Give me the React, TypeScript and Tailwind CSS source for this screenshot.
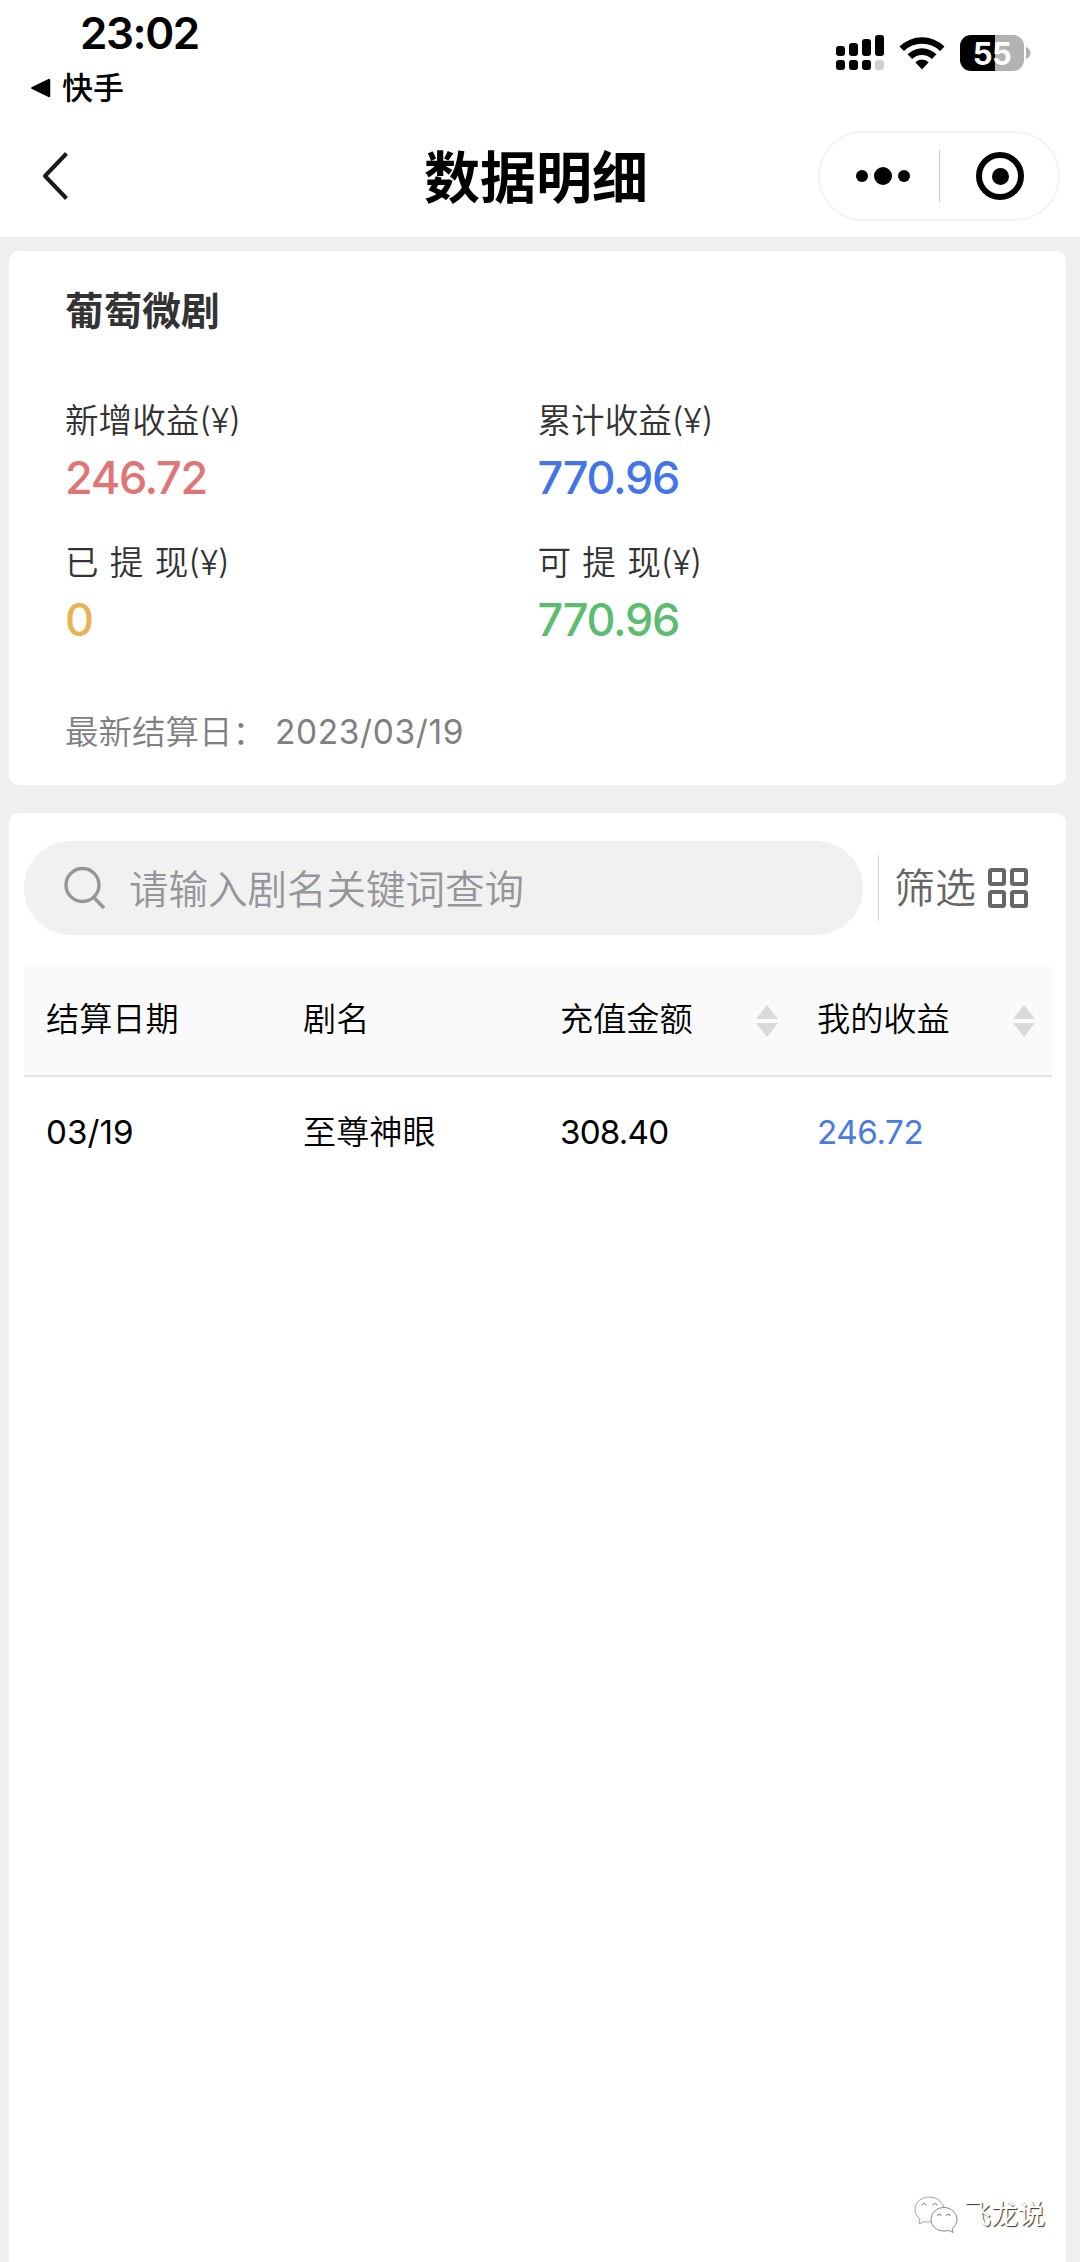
import React from 'react';

const stats = [
  { label: '新增收益(¥)', value: '246.72', color: 'text-[#e07575]' },
  { label: '累计收益(¥)', value: '770.96', color: 'text-[#4475e8]' },
  { label: '已 提 现(¥)', value: '0', color: 'text-[#e8b255]' },
  { label: '可 提 现(¥)', value: '770.96', color: 'text-[#5bbd70]' },
];

const columns = [
  { title: '结算日期', sortable: false },
  { title: '剧名', sortable: false },
  { title: '充值金额', sortable: true },
  { title: '我的收益', sortable: true },
];

const rows = [
  { date: '03/19', name: '至尊神眼', amount: '308.40', income: '246.72' },
];

const SignalIcon = () => (
  <svg width="48" height="36" viewBox="0 0 48 36">
    <rect x="0" y="11" width="9" height="10" rx="3" />
    <rect x="13" y="8" width="9" height="13" rx="3" />
    <rect x="26" y="4" width="9" height="17" rx="3" />
    <rect x="39" y="0" width="9" height="21" rx="3" />
    <rect x="0" y="25" width="9" height="10" rx="3" />
    <rect x="13" y="25" width="9" height="10" rx="3" />
    <rect x="26" y="25" width="9" height="10" rx="3" />
    <rect x="39" y="25" width="9" height="10" rx="3" fill="#d0d0d0" />
  </svg>
);

const WifiIcon = () => (
  <svg width="46" height="34" viewBox="0 0 46 34">
    <path d="M0.5 10.5 A32 32 0 0 1 45.5 10.5 L41 15 A25.7 25.7 0 0 0 5 15 Z" />
    <path d="M8.5 18.3 A20.6 20.6 0 0 1 37.5 18.3 L32.8 23 A14 14 0 0 0 13.2 23 Z" />
    <path d="M16.3 26.3 A9.5 9.5 0 0 1 29.7 26.3 L23 33.5 Z" />
  </svg>
);

const Battery = () => (
  <div className="flex items-center gap-[2px]">
    <div className="flex h-9 w-16 items-center justify-center rounded-[11px] bg-linear-to-r from-black from-55% to-[#b2b2b2] to-55% text-[31px] font-bold leading-none tracking-[-0.5px] text-white">
      55
    </div>
    <svg width="5" height="12" viewBox="0 0 5 12">
      <path d="M0 0 C6 2 6 10 0 12 Z" fill="#b2b2b2" />
    </svg>
  </div>
);

const StatusBar = () => (
  <div className="flex h-[115px] justify-between pl-[31px] pr-[49px]">
    <div className="pt-[9px]">
      <div className="pl-[49px] text-[44px] font-semibold leading-[48px] tracking-[-1.4px]">23:02</div>
      <div className="mt-[10px] flex h-[42px] items-center gap-[11px] text-[31px] font-medium">
        <svg width="20" height="20" viewBox="0 0 20 20">
          <path d="M1.5 10 L18 2 V18 Z" stroke="#000" strokeWidth="2.5" strokeLinejoin="round" />
        </svg>
        快手
      </div>
    </div>
    <div className="flex h-9 items-center gap-[15px] mt-[35px]">
      <SignalIcon />
      <WifiIcon />
      <Battery />
    </div>
  </div>
);

const NavBar = () => (
  <div className="flex h-[122px] items-center justify-between pl-[41px] pr-5">
    <svg className="mr-[185px]" width="28" height="50" viewBox="0 0 28 50" fill="none" stroke="#1a1a1a" strokeWidth="4">
      <path d="M25.5 2.5 L4 25 L25.5 47.5" strokeLinejoin="round" />
    </svg>
    <h1 className="whitespace-nowrap pt-[3px] text-[56px] font-bold leading-none">数据明细</h1>
    <div className="flex h-[90px] w-[242px] items-center rounded-full border-2 border-[#f3f3f3]">
      <div className="flex w-[119px] items-center justify-center gap-[6px] pl-[6px]">
        <span className="size-3 rounded-full bg-black" />
        <span className="size-[18px] rounded-full bg-black" />
        <span className="size-3 rounded-full bg-black" />
      </div>
      <div className="h-[52px] w-px bg-[#c8c8c8]" />
      <div className="flex flex-1 items-center justify-center pl-[2px]">
        <div className="flex size-12 items-center justify-center rounded-full border-6 border-black">
          <span className="size-[17px] rounded-full bg-black" />
        </div>
      </div>
    </div>
  </div>
);

const SummaryCard = () => (
  <section className="mt-[14px] h-[534px] rounded-[10px] bg-white px-14 pt-8">
    <h2 className="text-[38.7px] font-bold leading-[56px] text-[#333]">葡萄微剧</h2>
    <div className="mt-[58px] grid grid-cols-2">
      {stats.map((stat, index) => (
        <div key={index} className="h-[142px]">
          <div className="text-[33.6px] leading-[48px] text-[#333] [word-spacing:1.8px]">{stat.label}</div>
          <div className={`mt-[5px] text-[45px] font-medium leading-[56px] tracking-[-1.3px] ${stat.color}`}>{stat.value}</div>
        </div>
      ))}
    </div>
    <div className="mt-[27px] flex text-[33.5px] leading-[48px] text-[#808080]">
      <span className="w-[210px]">最新结算日：</span>
      <span className="font-normal tracking-[0.6px]">2023/03/19</span>
    </div>
  </section>
);

const SearchBar = () => (
  <div className="flex items-center">
    <div className="flex h-[94px] w-[839px] items-center rounded-full bg-[#f1f1f1] pl-10 text-[#96969a]">
      <svg width="42" height="44" viewBox="0 0 42 44" fill="none" stroke="currentColor" strokeWidth="3.4">
        <circle cx="18.5" cy="19" r="16.5" />
        <path d="M29.5 31 L40 42" />
      </svg>
      <span className="ml-[23px] pt-[5px] text-[39.5px]">请输入剧名关键词查询</span>
    </div>
    <div className="ml-[15px] h-[66px] w-px bg-[#d5d5d5]" />
    <div className="ml-[15px] flex items-center gap-3 text-[41px] text-[#666]">
      <span className="pt-[2px]">筛选</span>
      <svg width="40" height="40" viewBox="0 0 40 40" fill="none" stroke="#666" strokeWidth="4">
        <rect x="2" y="2" width="14" height="14" rx="1.5" />
        <rect x="24" y="2" width="14" height="14" rx="1.5" />
        <rect x="2" y="24" width="14" height="14" rx="1.5" />
        <rect x="24" y="24" width="14" height="14" rx="1.5" />
      </svg>
    </div>
  </div>
);

const SortIcon = () => (
  <svg width="22" height="32" viewBox="0 0 22 32" fill="#d9d9d9">
    <path d="M11 0 L22 14 H0 Z" />
    <path d="M0 18 H22 L11 32 Z" />
  </svg>
);

const DataTable = () => (
  <div className="mt-[31px] text-[33.2px]">
    <div className="grid h-[111px] grid-cols-4 border-b-2 border-[#e6e6e6] bg-[#fafafa]">
      {columns.map((column) => (
        <div key={column.title} className="flex items-center justify-between pl-[22px] pr-[17px]">
          <span className="pb-[2px]">{column.title}</span>
          {column.sortable && <SortIcon />}
        </div>
      ))}
    </div>
    {rows.map((row) => (
      <div key={row.name} className="grid h-[112px] grid-cols-4 items-center">
        <span className="pl-[22px] font-normal">{row.date}</span>
        <span className="pl-[22px]">{row.name}</span>
        <span className="pl-[22px] font-normal tracking-[-0.8px]">{row.amount}</span>
        <span className="pl-[22px] font-normal tracking-[-0.4px] text-[#4a7be0]">{row.income}</span>
      </div>
    ))}
  </div>
);

const Watermark = () => (
  <div className="absolute bottom-[28px] right-[35px] flex items-center gap-[6px]">
    <svg width="44" height="38" viewBox="0 0 44 38" fill="#fff" stroke="#a3a3a3" strokeWidth="1">
      <path d="M15 1 C7 1 1 6.5 1 13.5 C1 17.5 3 20.5 6 23 L5 28 L10.5 25.5 C12 26 13.5 26 15 26 C23 26 30 20.5 30 13.5 C30 6.5 23 1 15 1 Z" />
      <path d="M8 9.5 a2 2 0 0 1 4 0 M19 9.5 a2 2 0 0 1 4 0" stroke="#888" />
      <path d="M30 11.5 C22.5 11.5 17 17 17 23.5 C17 30 22.5 35 30 35 C31.5 35 33 34.8 34.5 34.3 L39 36.5 L38 32.5 C41 30.5 43 27 43 23.5 C43 17 37 11.5 30 11.5 Z" stroke="#888" />
      <path d="M23.5 20 a1.8 1.8 0 0 1 3.6 0 M32.5 20 a1.8 1.8 0 0 1 3.6 0" stroke="#777" />
    </svg>
    <span className="text-[27px] font-normal leading-9 text-white [text-shadow:1px_1px_1px_#333]">飞龙说</span>
  </div>
);

const App = () => {
  return (
    <div className="relative flex h-[2262px] w-[1080px] flex-col overflow-hidden bg-[#efefef] font-[350] font-['Inter','Noto_Sans_CJK_SC',sans-serif] text-black">
      <header className="bg-white">
        <StatusBar />
        <NavBar />
      </header>
      <main className="flex flex-1 flex-col pl-[9px] pr-[14px]">
        <SummaryCard />
        <section className="mt-7 flex-1 rounded-t-[10px] bg-white pl-[15px] pr-[14px] pt-7">
          <SearchBar />
          <DataTable />
        </section>
      </main>
      <Watermark />
    </div>
  );
};

export default App;
